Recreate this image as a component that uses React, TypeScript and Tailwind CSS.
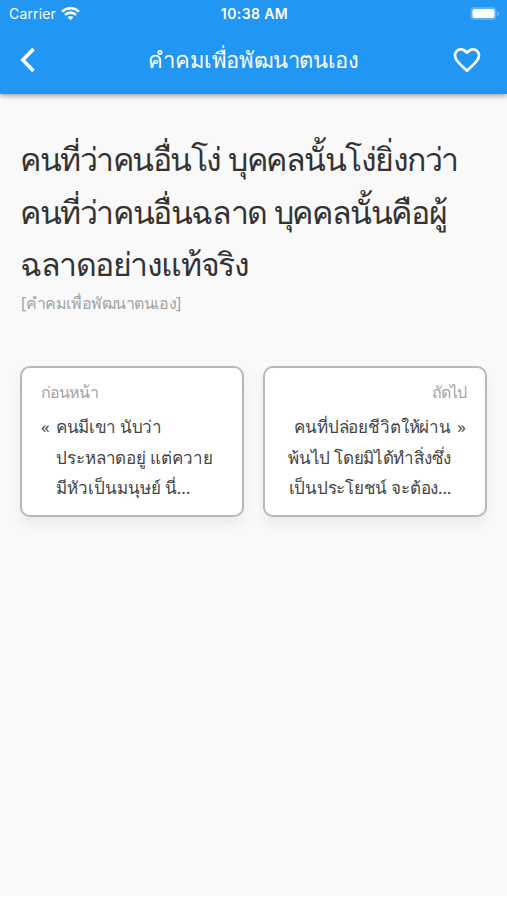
import clsx from "clsx";
import { MdFavoriteBorder } from "react-icons/md";

function WifiIcon() {
  return (
    <svg className="h-[14px] w-[19px]" viewBox="0 0 19 14" fill="none" stroke="currentColor" strokeWidth="2.6">
      <path d="M1 4.6a12.3 12.3 0 0 1 17 0" />
      <path d="M4 7.9a7.9 7.9 0 0 1 11 0" />
      <path d="M6.6 10.3 9.5 13.2l2.9-2.9a4.2 4.2 0 0 0-5.8 0Z" fill="currentColor" stroke="none" />
    </svg>
  );
}

function BatteryIcon() {
  return (
    <svg className="h-[14px] w-[30px]" viewBox="0 0 30 14" fill="none">
      <rect x="0.5" y="0" width="26" height="13" rx="4" fill="white" fillOpacity="0.25" />
      <rect x="2.5" y="2" width="22" height="9" rx="2" fill="white" />
      <path d="M27.5 4.500v4c1-.3 1.6-1 1.600-2s-.6-1.700-1.600-2Z" fill="white" fillOpacity="0.45" />
    </svg>
  );
}

function StatusBar() {
  return (
    <div className="grid h-[27px] grid-cols-3 items-center pr-[7px] pl-[9px] font-['Inter','Liberation_Sans',sans-serif] text-[14px]">
      <div className="flex items-center gap-[5px]">
        <span className="tracking-[0.15px]">Carrier</span>
        <WifiIcon />
      </div>
      <span className="text-center font-semibold tracking-[0.4px] whitespace-nowrap">10:38 AM</span>
      <div className="flex justify-end">
        <BatteryIcon />
      </div>
    </div>
  );
}

interface Line {
  text: string;
  className: string;
}

interface QuoteCardProps {
  label: string;
  mark: string;
  lines: Line[];
  next?: boolean;
}

function QuoteCard({ label, mark, lines, next }: QuoteCardProps) {
  return (
    <button
      className={clsx(
        "flex h-[151px] w-[224px] flex-col rounded-[10px] border-2 border-[#b8b8b8] bg-white px-[19px] pt-[11px] shadow-[0_7px_12px_rgba(0,0,0,0.06)]",
        next ? "items-end text-right" : "items-start text-left"
      )}
    >
      <span className="text-[16px] leading-[26px] tracking-[-0.9px] text-[#a5a5a5]">{label}</span>
      <div className={clsx("mt-[7px] flex text-[17px] leading-[30.7px] text-[#444]", next && "flex-row-reverse")}>
        <span className="w-[15px] shrink-0">{mark}</span>
        <div>
          {lines.map((line) => (
            <p key={line.text} className={clsx("whitespace-nowrap", line.className)}>
              {line.text}
            </p>
          ))}
        </div>
      </div>
    </button>
  );
}

const quote: Line[] = [
  { text: "คนที่ว่าคนอื่นโง่ บุคคลนั้นโง่ยิ่งกว่า", className: "tracking-[-1.5px] [word-spacing:1px]" },
  { text: "คนที่ว่าคนอื่นฉลาด บุคคลนั้นคือผู้", className: "tracking-[-1.4px]" },
  { text: "ฉลาดอย่างแท้จริง", className: "tracking-[-1.45px]" },
];

const previousLines: Line[] = [
  { text: "คนมีเขา นับว่า", className: "tracking-[-0.35px]" },
  { text: "ประหลาดอยู่ แต่ควาย", className: "tracking-[-0.1px]" },
  { text: "มีหัวเป็นมนุษย์ นี่...", className: "tracking-[-0.05px]" },
];

const nextLines: Line[] = [
  { text: "คนที่ปล่อยชีวิตให้ผ่าน", className: "tracking-[-0.15px]" },
  { text: "พ้นไป โดยมิได้ทำสิ่งซึ่ง", className: "tracking-[-0.3px]" },
  { text: "เป็นประโยชน์ จะต้อง...", className: "tracking-[-0.25px]" },
];

export default function App() {
  return (
    <div className="h-[900px] w-[507px] overflow-hidden bg-white font-['Noto_Sans','Liberation_Sans',sans-serif]">
      <div className="h-[896px] bg-[#f9f9f9]">
        <header className="h-[94px] bg-[#2196f3] text-white shadow-[0_2px_5px_rgba(0,0,0,0.35)]">
          <StatusBar />
          <div className="grid h-[66px] grid-cols-[60px_1fr_60px] items-center">
            <button aria-label="ย้อนกลับ" className="pl-5">
              <svg className="size-[26px]" viewBox="0 0 26 26" fill="none" stroke="currentColor" strokeWidth="3.6">
                <path d="M13.5 2 2.8 13l10.7 11" />
              </svg>
            </button>
            <h1 className="pb-[3px] text-center text-[22px] leading-8 tracking-[-0.4px] whitespace-nowrap">คำคมเพื่อพัฒนาตนเอง</h1>
            <button aria-label="รายการโปรด" className="pl-1">
              <MdFavoriteBorder className="size-8" />
            </button>
          </div>
        </header>

        <main className="px-5 pt-[39px]">
          <div className="text-[32px] leading-[52.5px] text-[#333]">
            {quote.map((line) => (
              <p key={line.text} className={clsx("whitespace-nowrap", line.className)}>
                {line.text}
              </p>
            ))}
          </div>
          <p className="pl-px text-[16px] leading-6 tracking-[-0.45px] text-[#a5a5a5]">[คำคมเพื่อพัฒนาตนเอง]</p>

          <div className="mt-[51.5px] flex justify-between">
            <QuoteCard label="ก่อนหน้า" mark="«" lines={previousLines} />
            <QuoteCard label="ถัดไป" mark="»" lines={nextLines} next />
          </div>
        </main>
      </div>
    </div>
  );
}
